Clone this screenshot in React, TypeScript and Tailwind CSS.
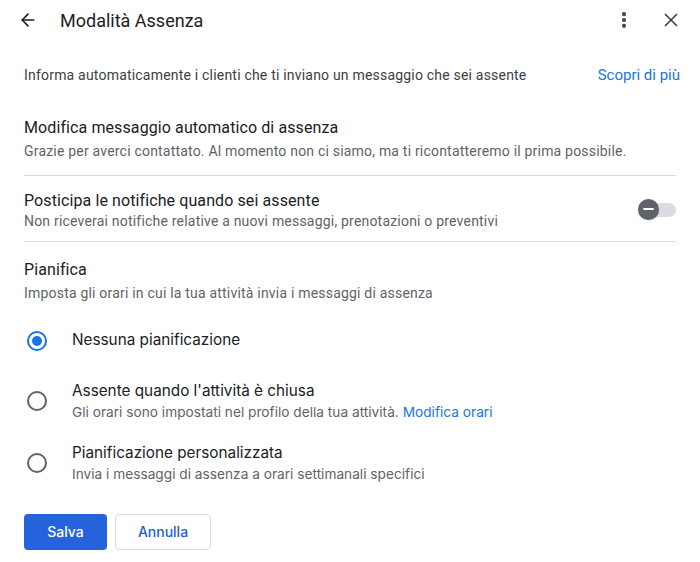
import React from 'react';
import { ArrowLeft, MoreVertical, X } from 'lucide-react';

const roboto = { fontFamily: 'Roboto, "Liberation Sans", sans-serif' };

const Radio: React.FC<{ checked?: boolean }> = ({ checked }) => (
  <span
    className={`w-5 h-5 rounded-full border-2 flex items-center justify-center shrink-0 ${
      checked ? 'border-[#1a73e8]' : 'border-[#5f6368]'
    }`}
  >
    {checked && <span className="w-2.5 h-2.5 rounded-full bg-[#1a73e8]" />}
  </span>
);

const App: React.FC = () => {
  return (
    <div className="w-[700px] h-[562px] bg-white text-[#202124] overflow-hidden" style={roboto}>
      {/* header */}
      <div className="h-[40px] flex items-center pl-[18px] pr-[18px]">
        <ArrowLeft size={20} strokeWidth={2} className="text-[#202124]" />
        <h1 className="ml-[22px] text-[18px] text-[#202124]">Modalità Assenza</h1>
        <div className="ml-auto flex items-center gap-[26px]">
          <MoreVertical size={20} strokeWidth={3} className="text-[#3c4043]" />
          <X size={22} strokeWidth={1.8} className="text-[#3c4043]" />
        </div>
      </div>

      <div className="px-6">
        <div className="mt-[24px] flex items-center justify-between text-[14px] tracking-[0.2px]">
          <span className="text-[#3c4043]">
            Informa automaticamente i clienti che ti inviano un messaggio che sei assente
          </span>
          <a className="text-[#1a73e8] text-[15px] tracking-normal -mr-[4px]">Scopri di più</a>
        </div>

        <div className="mt-[29px] pb-[14px] border-b border-[#dadce0]">
          <div className="text-[16px] leading-[24px] tracking-[0.1px]">Modifica messaggio automatico di assenza</div>
          <div className="text-[14px] leading-[20px] mt-[1px] tracking-[0.2px] text-[#5f6368]">
            Grazie per averci contattato. Al momento non ci siamo, ma ti ricontatteremo il prima possibile.
          </div>
        </div>

        <div className="pt-[14px] pb-[11px] border-b border-[#dadce0] flex items-center justify-between">
          <div>
            <div className="text-[16px] leading-[22px] tracking-[0.1px]">Posticipa le notifiche quando sei assente</div>
            <div className="text-[14px] leading-[18px] tracking-[0.2px] text-[#5f6368]">
              Non riceverai notifiche relative a nuovi messaggi, prenotazioni o preventivi
            </div>
          </div>
          <div className="relative w-[36px] h-[14px] rounded-full bg-[#dadce0] mr-0">
            <span className="absolute -left-[2px] -top-[4px] w-[21px] h-[21px] rounded-full bg-[#5f6368] shadow flex items-center justify-center">
              <span className="w-[11px] h-[2px] bg-white rounded" />
            </span>
          </div>
        </div>

        <div className="pt-[16px]">
          <div className="text-[16px] leading-[24px] tracking-[0.1px]">Pianifica</div>
          <div className="text-[14px] leading-[18px] mt-[2px] tracking-[0.2px] text-[#5f6368]">
            Imposta gli orari in cui la tua attività invia i messaggi di assenza
          </div>
        </div>

        <div style={{ fontFamily: 'Inter, "Liberation Sans", sans-serif' }}>
          <div className="mt-[29px] flex items-center h-[20px]">
            <span className="ml-[3px]"><Radio checked /></span>
            <span className="ml-[25px] text-[15.3px] text-[#202124]">Nessuna pianificazione</span>
          </div>

          <div className="mt-[29px] flex items-center">
            <span className="ml-[3px]"><Radio /></span>
            <div className="ml-[25px]">
              <div className="text-[15.3px] leading-[22px]">Assente quando l'attività è chiusa</div>
              <div className="text-[13.7px] leading-[20px] text-[#5f6368]">
                Gli orari sono impostati nel profilo della tua attività.{' '}
                <span className="text-[#1a73e8]">Modifica orari</span>
              </div>
            </div>
          </div>

          <div className="mt-[20px] flex items-center">
            <span className="ml-[3px]"><Radio /></span>
            <div className="ml-[25px]">
              <div className="text-[15.3px] leading-[22px]">Pianificazione personalizzata</div>
              <div className="text-[13.7px] leading-[20px] text-[#5f6368]">
                Invia i messaggi di assenza a orari settimanali specifici
              </div>
            </div>
          </div>

          <div className="mt-[30px] flex gap-2">
            <button className="w-[83px] h-[36px] rounded-[4px] bg-[#2563dc] text-white text-[14px] font-medium">
              Salva
            </button>
            <button className="w-[96px] h-[36px] rounded-[4px] border border-[#dadce0] text-[#1a5fd6] text-[14px] font-medium bg-white">
              Annulla
            </button>
          </div>
        </div>
      </div>
    </div>
  );
};

export default App;
